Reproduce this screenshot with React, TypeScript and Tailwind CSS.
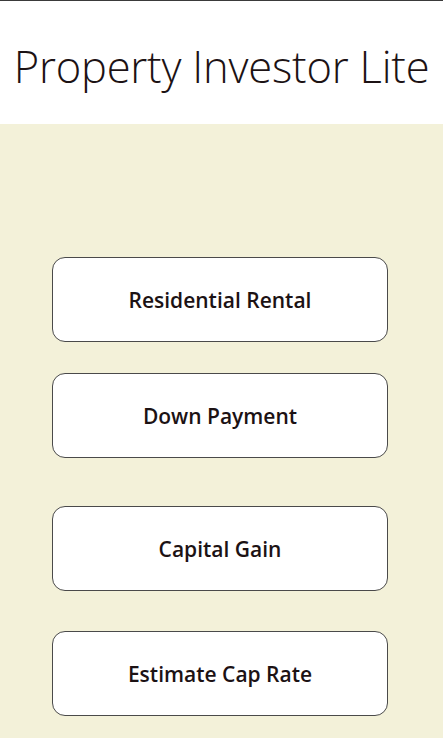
import React from "react";

const menuItems = [
  { label: "Residential Rental", mt: "mt-[133px]" },
  { label: "Down Payment", mt: "mt-[31px]" },
  { label: "Capital Gain", mt: "mt-[48px]" },
  { label: "Estimate Cap Rate", mt: "mt-[40px]" },
];

export default function App() {
  return (
    <div className="flex h-[738px] w-[443px] flex-col overflow-hidden border-t border-[#3a3a3a] bg-[#f3f1d9] font-['Open_Sans',sans-serif] text-[#1c1214]">
      <div className="flex h-[123px] items-center justify-center bg-white pt-[8px]">
        <h1 className="text-[43.5px] font-[350] leading-none tracking-[-0.2px]">Property Investor Lite</h1>
      </div>
      <div className="flex flex-col pl-[52px]">
        {menuItems.map((item) => (
          <button
            key={item.label}
            className={`${item.mt} flex h-[85px] w-[336px] items-center justify-center rounded-[13px] border border-[#4a4a4a] bg-white pt-[2px] text-[21px] font-semibold`}
          >
            {item.label}
          </button>
        ))}
      </div>
    </div>
  );
}
